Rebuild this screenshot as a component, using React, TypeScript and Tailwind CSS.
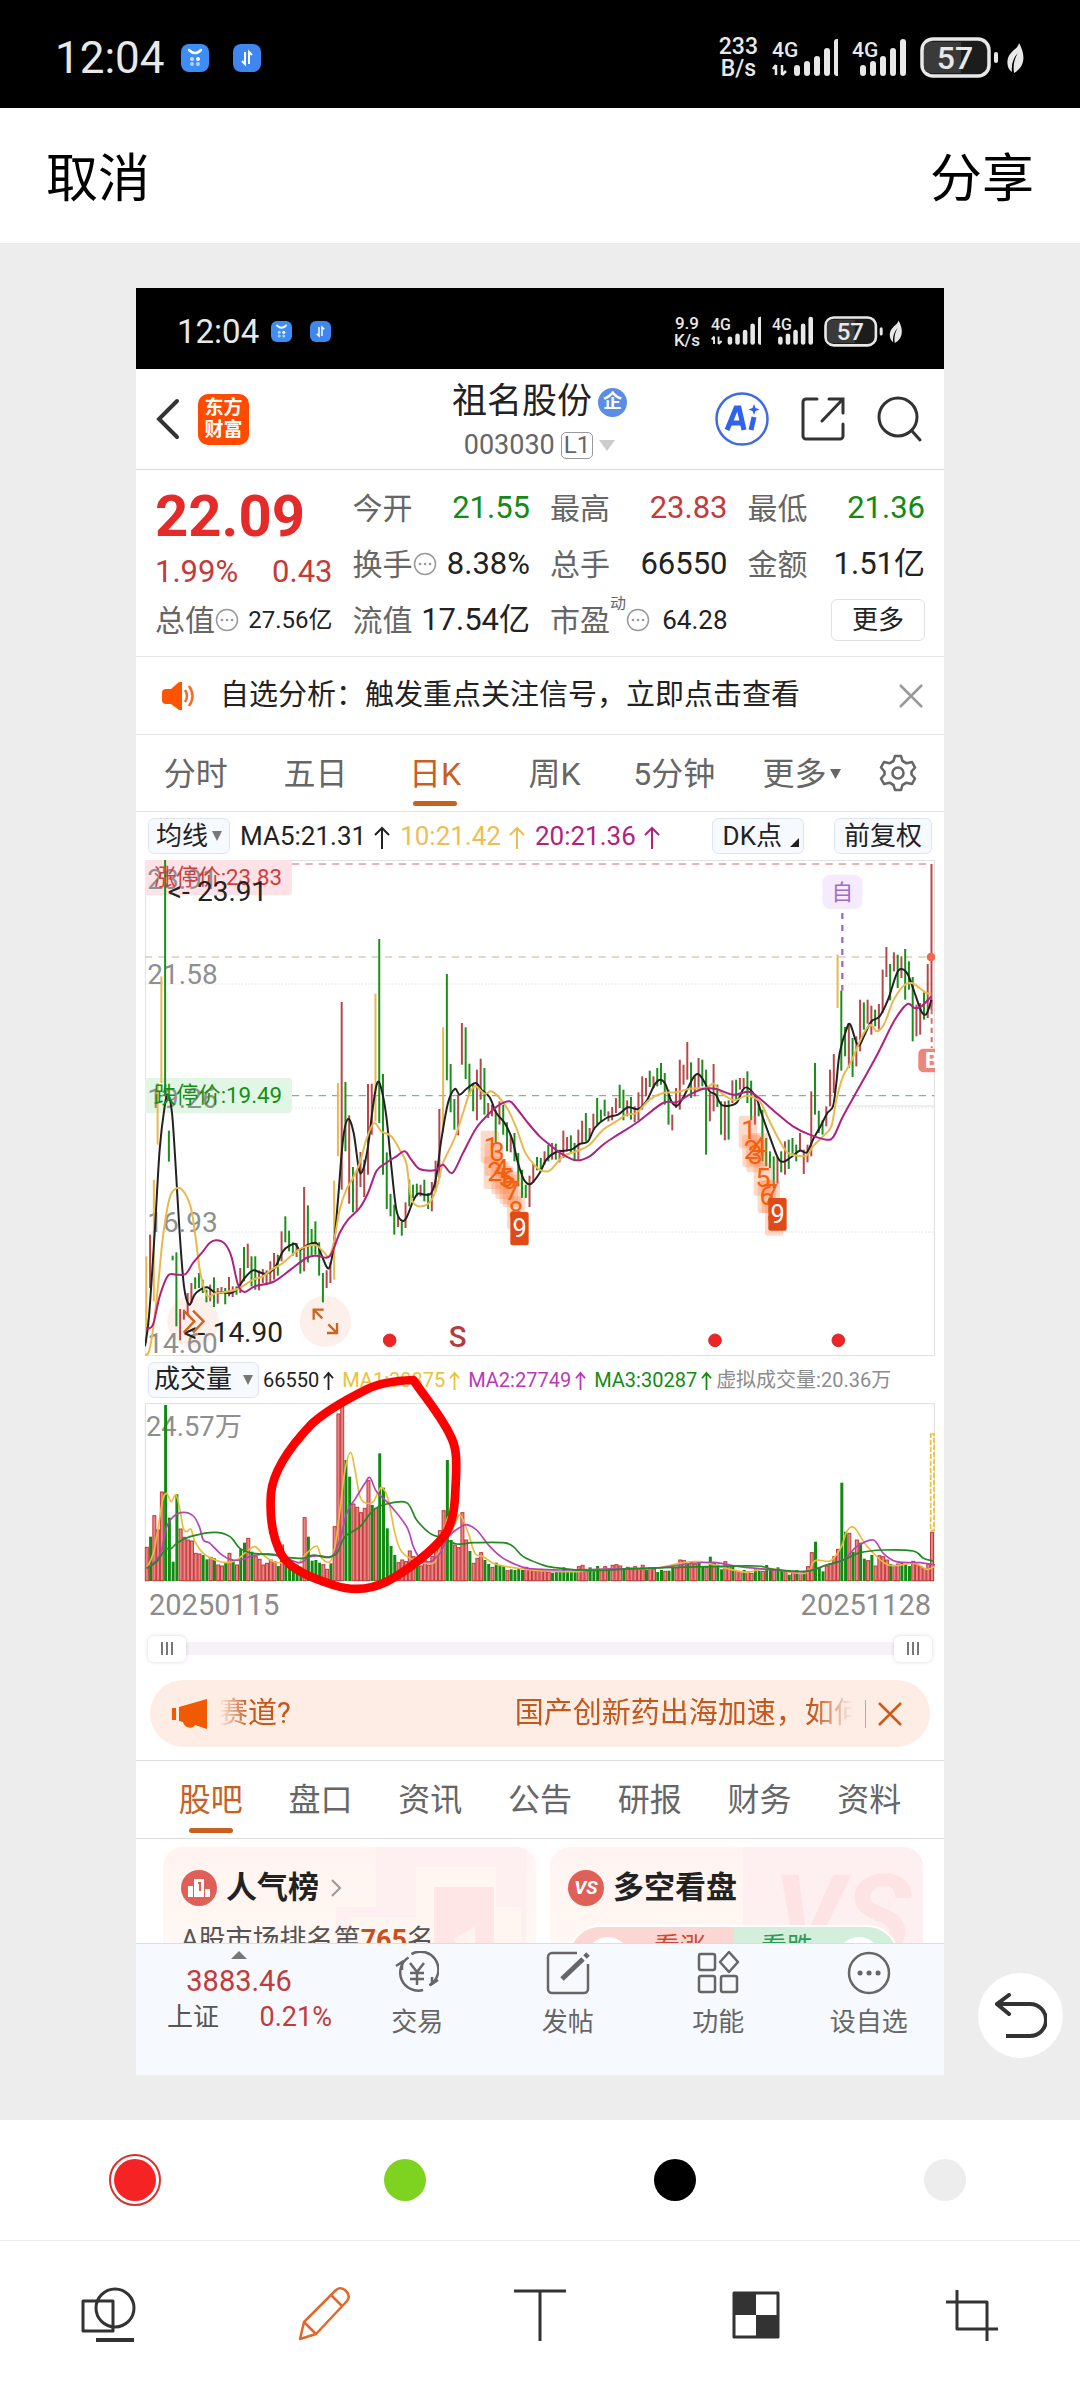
import { useState } from "react";
import type { ReactNode } from "react";

// r = up, g = down, y = limit-up; then the top and bottom of each bar
const CANDLES =
    "y1220-1480 r1155-1315 y990-1355 y700-885 y380-700 g31-735 g843-936 g1218-1232 g1208-1430 r1378-1472 " +
    "r1380-1410 r1330-1395 r1300-1360 g1283-1318 g1270-1315 g1290-1330 g1320-1358 r1305-1355 g1283-1372 r1315-1362 " +
    "r1312-1332 g1315-1364 r1282-1340 r1310-1342 g1310-1335 r1255-1330 g1192-1295 r1182-1255 g1220-1310 g1220-1320 " +
    "r1262-1322 r1258-1300 r1262-1300 r1235-1297 r1210-1290 g1215-1278 r1145-1235 g1100-1178 g1143-1205 g1178-1218 " +
    "r1180-1222 g1195-1272 r1012-1265 g1067-1238 g1138-1218 g1115-1215 g1178-1278 g1270-1358 r1262-1315 r1238-1300 " +
    "y993-1290 y700-920 r457-1020 g697-905 r797-1062 g952-1088 r963-1085 r907-1012 r930-1042 r703-975 " +
    "r702-855 y432-815 g268-820 g673-975 g908-1078 g1033-1100 g1065-1155 r1100-1132 g1115-1158 r1058-1135 " +
    "g990-1070 g1005-1045 g1002-1040 r1005-1040 g990-1055 g1030-1078 r997-1085 r933-1025 r778-985 y533-850 " +
    "g373-692 g643-788 g748-840 r735-857 r520-645 g533-688 g642-732 g700-785 r660-812 r627-750 " +
    "g655-795 r760-805 r765-800 g782-878 r755-825 g765-855 g818-905 r855-908 g850-935 g910-1010 " +
    "g960-1045 g1005-1045 r978-1072 r942-1000 g922-962 g925-960 r905-945 g885-935 r880-930 g882-930 " +
    "r900-938 r843-925 r862-905 g857-910 g880-930 r840-930 r813-880 g790-875 r835-865 r792-840 " +
    "g745-828 g780-815 g750-800 r785-815 r772-812 r745-790 g705-775 g720-812 r752-800 g742-810 " +
    "r770-818 r728-812 r680-780 r685-740 g663-712 r680-715 g655-710 g640-705 g670-765 g720-825 " +
    "r795-842 r715-775 r630-780 r645-705 r577-690 g638-745 r680-740 r625-715 g630-710 g660-915 " +
    "r730-815 r643-785 g705-772 g755-855 r755-872 g752-870 r692-760 g690-750 r685-720 r685-715 " +
    "g665-760 g693-812 r745-825 g762-800 g780-935 g865-950 g905-955 g920-1015 r922-1002 g905-968 " +
    "r875-975 g870-958 g865-912 g885-935 r850-905 r900-973 r885-938 r725-920 g640-795 g783-850 " +
    "g812-855 r770-830 r660-770 r613-730 y315-475 g423-663 g532-620 r520-655 g565-682 r560-650 " +
    "r450-605 g458-540 r450-522 r468-555 g480-530 r463-540 r360-490 r292-382 g343-452 r308-365 " +
    "g315-415 r320-385 g298-450 g335-420 g382-575 r465-560 r460-555 g428-510 r343-505 r43-480";

const VOLUMES =
    "r562 g530 r467 r510 r396 g135 g473 g605 g403 r507 r532 r540 r543 r580 r582 g585 g598 r592 g595 r615 " +
    "r618 g608 r580 g600 r615 g567 g548 r535 g575 r590 r598 r615 r610 r600 r605 g618 r555 g600 g610 g618 " +
    "g615 g620 r473 g530 g602 g600 g608 r614 r628 g610 r500 r162 r140 g300 g350 r432 r442 r458 r445 r362 " +
    "g435 r445 g280 g383 g505 g558 g585 r608 r600 r605 r573 r590 g610 r618 r600 r615 r590 r570 r512 r452 " +
    "g300 g540 r555 r563 r458 r540 g573 r610 r595 r578 g600 g612 r622 g608 g615 g618 r632 g628 g630 g626 " +
    "g630 r622 r628 r632 r630 r628 r634 r636 g638 g636 g634 g622 g632 g636 g634 r620 r616 r628 g622 g634 " +
    "g618 r630 r620 g624 r616 r614 r618 g628 r622 r624 r620 r628 r616 g630 r624 r628 g636 g630 r634 g632 " +
    "g620 r624 r600 r602 g610 r608 r612 g606 g618 r622 g590 r610 g614 g628 r605 r620 g618 r634 r638 g630 " +
    "r636 r640 g628 g632 r634 g615 g626 r630 g622 g632 r634 g644 r636 g630 r640 g634 r620 " +
    "r578 g545 g622 g634 r618 r612 r590 r568 g368 g515 r520 g575 r540 g548 g596 r602 g585 r618 r587 r590 " +
    "r600 g612 r616 r612 g606 g614 g618 r604 r614 r620 r626 r612 r517";

type Bar = { kind: string; top: number; bottom: number };

const parseBars = (text: string, base: number): Bar[] =>
    text.split(" ").map(item => {
        const [top, bottom] = item.slice(1).split("-").map(Number);
        return { kind: item[0], top, bottom: bottom ?? base };
    });

const candles = parseBars(CANDLES, 0);
const volumes = parseBars(VOLUMES, 663);

// turns "x,y x,y ..." into a smooth path
function curve(text: string) {
    const p = text.split(" ").map(s => s.split(",").map(Number));
    let d = `M${p[0][0]} ${p[0][1]}`;
    for (let i = 0; i < p.length - 1; i++) {
        const a = p[i - 1] ?? p[i];
        const b = p[i];
        const c = p[i + 1];
        const e = p[i + 2] ?? c;
        d += `C${b[0] + (c[0] - a[0]) / 6} ${b[1] + (c[1] - a[1]) / 6} ${c[0] - (e[0] - b[0]) / 6} ${c[1] - (e[1] - b[1]) / 6} ${c[0]} ${c[1]}`;
    }
    return d;
}

const MA5 =
    "46,1490 58,1400 75,1150 90,900 105,770 115,735 127,790 138,950 150,1150 163,1310 178,1365 195,1335 212,1320 233,1313 255,1328 280,1328 305,1330 325,1315 345,1285 370,1262 390,1268 410,1272 435,1255 460,1205 480,1188 497,1183 510,1200 530,1188 560,1180 575,1215 597,1256 612,1190 625,1050 640,870 655,808 672,850 688,960 700,960 715,890 730,770 742,702 753,710 770,800 785,950 800,1080 815,1112 830,1105 850,1055 865,1032 885,1035 905,1030 920,980 935,870 955,760 975,718 990,735 1010,718 1038,700 1055,720 1080,743 1100,790 1125,820 1148,870 1165,940 1183,990 1203,1003 1230,970 1250,930 1280,907 1325,900 1350,883 1375,875 1395,835 1430,805 1465,795 1495,773 1525,778 1550,755 1575,705 1592,690 1608,705 1625,755 1643,768 1665,735 1690,685 1705,673 1720,690 1740,725 1758,735 1775,765 1800,768 1822,758 1840,720 1855,715 1880,745 1895,790 1920,860 1945,925 1962,936 1985,922 2010,903 2032,908 2050,870 2075,825 2093,790 2110,770 2120,700 2130,610 2150,540 2162,525 2185,587 2205,555 2225,515 2250,500 2275,450 2300,375 2315,358 2335,375 2355,430 2375,485 2388,495 2398,475 2405,450";
const MA10 =
    "46,1517 58,1505 70,1440 85,1310 100,1160 120,1045 143,1015 165,1030 185,1080 200,1180 212,1270 232,1338 260,1330 300,1325 330,1315 370,1290 400,1280 430,1257 460,1240 500,1205 530,1190 560,1187 580,1205 598,1220 612,1180 630,1080 650,1020 670,985 690,940 710,870 733,820 755,845 785,860 810,900 830,940 840,1020 850,1058 875,1070 905,1052 925,1000 940,940 975,865 1000,790 1020,730 1038,710 1065,732 1085,725 1110,745 1135,780 1160,835 1185,905 1205,935 1230,960 1260,963 1300,920 1340,905 1380,885 1420,840 1460,815 1490,795 1520,790 1560,750 1600,730 1640,728 1680,717 1730,715 1752,702 1775,730 1815,752 1850,738 1890,755 1915,805 1940,855 1970,905 1995,917 2030,918 2050,890 2080,860 2105,830 2120,750 2140,680 2160,645 2180,600 2200,555 2222,525 2242,545 2265,520 2290,455 2320,410 2345,400 2370,415 2390,430 2405,432";
const MA20 =
    "50,1437 70,1425 90,1340 115,1278 140,1275 168,1273 190,1240 220,1205 240,1180 260,1172 285,1182 305,1220 325,1305 345,1327 375,1310 430,1297 480,1262 530,1225 560,1218 600,1220 630,1150 655,1110 690,1075 715,1030 740,965 765,943 800,920 825,905 845,930 870,958 915,962 940,945 968,970 1000,910 1040,835 1080,790 1110,765 1140,755 1160,775 1195,820 1230,860 1260,885 1300,915 1340,932 1380,920 1420,885 1460,858 1520,820 1600,760 1640,758 1680,735 1720,718 1760,718 1810,735 1860,727 1900,755 1940,790 1990,830 2040,855 2090,870 2112,860 2140,800 2190,710 2240,620 2290,520 2320,475 2337,462 2355,475 2375,470 2405,440";

const VMA1 =
    "20,625 40,580 55,500 68,420 80,400 93,425 108,405 120,450 130,505 140,515 153,508 165,545 190,580 225,600 260,608 290,600 320,575 345,560 370,585 400,605 440,610 470,615 495,585 530,558 545,595 570,605 585,560 600,450 615,330 632,277 645,330 660,410 680,430 700,425 715,395 727,383 745,420 765,520 785,575 830,605 860,610 885,605 905,540 925,470 940,500 960,465 985,520 1005,580 1030,590 1060,610 1100,620 1200,632 1304,635 1382,628 1539,625 1617,610 1680,605 1759,625 1821,637 1884,625 1994,640 2025,602 2072,602 2104,560 2120,515 2143,503 2182,560 2245,615 2323,610 2360,628 2385,618";
const VMA2 =
    "20,625 50,600 65,570 80,500 100,470 130,457 160,468 178,500 190,540 210,550 240,580 270,598 300,600 330,590 360,583 400,583 440,595 480,608 510,590 545,588 575,590 600,540 620,460 650,410 675,370 690,353 710,395 750,435 800,500 820,560 840,595 870,605 900,580 925,530 960,502 980,494 1010,510 1050,560 1090,595 1150,622 1200,628 1300,630 1400,627 1540,625 1640,612 1720,607 1800,620 1880,628 1990,635 2060,615 2110,600 2150,560 2200,540 2230,580 2270,605 2340,608 2385,615";
const VMA3 =
    "20,625 50,605 75,570 95,565 110,550 150,530 225,517 270,530 300,565 340,580 400,585 440,592 490,595 520,585 560,592 590,580 615,530 660,500 700,450 740,432 800,428 830,480 870,520 910,535 950,552 1000,548 1090,548 1120,560 1150,590 1200,612 1240,622 1350,632 1500,625 1700,620 1850,618 1900,628 2000,634 2060,615 2110,600 2160,578 2230,570 2320,573 2350,595 2380,603";

const barColor: Record<string, string> = { r: "#b5494a", g: "#1b8f1b", y: "#e9b94f" };

function Signal({ data, className }: { data?: boolean; className: string }) {
    const x0 = data ? 22 : 8;
    return (
        <svg viewBox={data ? "0 0 66 40" : "0 0 54 40"} className={className} fill="#e8e8e8" aria-hidden="true">
            <text x="0" y="19" fontSize="21" fontWeight="500">4G</text>
            {data && <path d="M4 27v10M4 27l-3 4M10 37V27M10 37l4-4" stroke="#e8e8e8" strokeWidth="2.5" fill="none" />}
            {[11, 15, 20, 28, 37].map((h, i) => (
                <rect key={h} x={x0 + i * 10} y={38 - h} width="6" height={h} rx="3" />
            ))}
        </svg>
    );
}

function StatusBar({ speed, unit, small }: { speed: string; unit: string; small?: boolean }) {
    return (
        <div
            className={
                small
                    ? "flex h-[81px] items-center bg-black pt-[6px] pr-[41px] pl-[41px] text-[#e8e8e8]"
                    : "flex h-[108px] items-center bg-black pt-2 pr-[55px] pl-[55px] text-[#e8e8e8]"
            }
        >
            <span className={small ? "text-[33px]" : "text-[44px]"}>12:04</span>
            <svg viewBox="0 0 28 28" className={small ? "ml-3 size-[21px]" : "ml-4 size-7"} aria-hidden="true">
                <rect width="28" height="28" rx="8" fill="#3d8df5" />
                <path d="M8 6q6 6 12 0" stroke="#fff" strokeWidth="2.5" fill="none" strokeLinecap="round" />
                <g fill="#fff">
                    <circle cx="11" cy="15" r="2" opacity=".7" />
                    <circle cx="17" cy="15" r="2" />
                    <circle cx="11" cy="20" r="2" opacity=".6" />
                    <circle cx="17" cy="20" r="2" opacity=".6" />
                </g>
            </svg>
            <svg viewBox="0 0 28 28" className={small ? "ml-[18px] size-[21px]" : "ml-6 size-7"} aria-hidden="true">
                <rect width="28" height="28" rx="8" fill="#3f86ee" />
                <path d="M12 8v12l-3-3M16 20V8l3 3" stroke="#fff" strokeWidth="2" fill="none" />
            </svg>
            <div className={small ? "ml-auto flex items-center gap-[11px]" : "ml-auto flex items-center gap-[14px]"}>
                <div className={small ? "text-center text-[17px] leading-[17px] font-medium" : "text-center text-[23px] leading-[22px] font-medium"}>
                    <div>{speed}</div>
                    <div>{unit}</div>
                </div>
                <Signal data className={small ? "w-[50px]" : "w-[66px]"} />
                <Signal className={small ? "w-[41px]" : "w-[54px]"} />
                <svg viewBox="0 0 105 42" className={small ? "w-[79px]" : "w-[105px]"} aria-hidden="true">
                    <rect x="2" y="2" width="67" height="37" rx="11" fill="#1c1c1c" stroke="#e8e8e8" strokeWidth="3.5" />
                    <path d="M10 5h31v31H10a6 6 0 0 1-6-6V11a6 6 0 0 1 6-6z" fill="#3a3a3a" />
                    <text x="35" y="32" fontSize="32" fontWeight="500" textAnchor="middle" fill="#e8e8e8">57</text>
                    <rect x="74" y="15" width="4" height="11" rx="2" fill="#e8e8e8" />
                    <path d="M99 6c7 12 6 24-5 30-1-7 0-14 4-20-5 5-7 12-6 19-6-4-6-14-1-19 3-4 7-5 8-10z" fill="#e8e8e8" />
                </svg>
            </div>
        </div>
    );
}

function Up() {
    return (
        <svg viewBox="0 0 16 24" className="ml-2 inline h-6 w-4" fill="none" stroke="currentColor" strokeWidth="2" aria-hidden="true">
            <path d="M8 23V2M1 9l7-7 7 7" />
        </svg>
    );
}

function SmallUp() {
    return (
        <svg viewBox="0 0 12 22" className="ml-1 inline h-5 w-[11px]" fill="none" stroke="currentColor" strokeWidth="2" aria-hidden="true">
            <path d="M6 21V2M1 8l5-6 5 6" />
        </svg>
    );
}

function Dots() {
    return (
        <svg viewBox="0 0 24 24" className="size-6 shrink-0" fill="none" stroke="#999" strokeWidth="1.5" aria-hidden="true">
            <circle cx="12" cy="12" r="10.5" />
            <path d="M7 12h.1M12 12h.1M17 12h.1" strokeWidth="2.6" strokeLinecap="round" />
        </svg>
    );
}

function Cell({ label, value, tone, info, sup, size }: { label: string; value: string; tone?: string; info?: boolean; sup?: string; size?: string }) {
    return (
        <div className="flex h-14 items-center whitespace-nowrap">
            <span className="text-[30px] text-[#666]">{label}</span>
            {sup && <span className="self-start text-base text-[#666]">{sup}</span>}
            {info && <Dots />}
            <span className={`ml-auto ${size ?? "text-[31px]"} ${tone ?? "text-[#222]"}`}>{value}</span>
        </div>
    );
}

function Header() {
    return (
        <header className="grid h-[101px] grid-cols-[1fr_auto_1fr] items-center border-b border-[#ddd] bg-white pr-[21px] pl-5">
            <div className="flex items-center gap-[18px]">
                <button aria-label="返回">
                    <svg viewBox="0 0 24 42" className="h-[42px] w-6" fill="none" stroke="#333" strokeWidth="4" strokeLinecap="round">
                        <path d="M21 3L3 21l18 18" />
                    </svg>
                </button>
                <div className="flex size-[51px] flex-col items-center justify-center rounded-[10px] bg-[#ff4b00] text-[19px] leading-[22px] font-bold text-white">
                    <span>东方</span>
                    <span>财富</span>
                </div>
            </div>
            <div className="flex flex-col items-center pt-[6px]">
                <div className="flex items-center gap-[6px]">
                    <h1 className="text-[35px] leading-[46px] text-[#222]">祖名股份</h1>
                    <span className="flex size-[29px] items-center justify-center rounded-full bg-[#5b8ce6] text-[19px] font-bold text-white">企</span>
                </div>
                <div className="flex items-center gap-[6px] text-[27px] leading-[40px] text-[#666]">
                    003030
                    <span className="rounded-[5px] border border-[#999] px-[2px] text-[24px] leading-[25px]">L1</span>
                    <svg viewBox="0 0 16 11" className="w-4" fill="#ccc" aria-hidden="true">
                        <path d="M0 0h16L8 11z" />
                    </svg>
                </div>
            </div>
            <div className="flex items-center justify-end gap-8">
                <button aria-label="AI">
                    <svg viewBox="0 0 54 54" className="size-[54px]" fill="none">
                        <circle cx="27" cy="27" r="25.5" stroke="#4169e1" strokeWidth="2.5" />
                        <path d="M12 38l9-22h3l5 22M16 31h11" stroke="#2f62f0" strokeWidth="5" />
                        <path d="M39 25l-3 13" stroke="#2f62f0" strokeWidth="5" />
                        <path d="M39 12l1.5 4 4 1.5-4 1.5-1.5 4-1.5-4-4-1.5 4-1.5z" fill="#2f62f0" />
                    </svg>
                </button>
                <button aria-label="分享行情">
                    <svg viewBox="0 0 44 44" className="size-11" fill="none" stroke="#333" strokeWidth="3" strokeLinecap="round">
                        <path d="M16 2H5a3 3 0 0 0-3 3v34a3 3 0 0 0 3 3h34a3 3 0 0 0 3-3V27M28 2h14v14M42 2L21 24" />
                    </svg>
                </button>
                <button aria-label="搜索">
                    <svg viewBox="0 0 46 46" className="size-[46px]" fill="none" stroke="#333" strokeWidth="3" strokeLinecap="round">
                        <circle cx="21" cy="21" r="19" />
                        <path d="M35 35l8 9" />
                    </svg>
                </button>
            </div>
        </header>
    );
}

function Quote() {
    return (
        <section className="grid grid-cols-4 gap-x-5 border-b border-[#e5e5e5] px-[19px] pt-[10px] pb-2">
            <div>
                <p className="text-[58px] leading-[72px] font-bold text-[#e52a2a]">22.09</p>
                <p className="flex justify-between text-[31px] leading-10 text-[#c43a3a]">
                    <span>1.99%</span>
                    <span>0.43</span>
                </p>
                <Cell label="总值" value="27.56亿" info size="text-[24px]" />
            </div>
            <div>
                <Cell label="今开" value="21.55" tone="text-[#138a13]" />
                <Cell label="换手" value="8.38%" info />
                <Cell label="流值" value="17.54亿" />
            </div>
            <div>
                <Cell label="最高" value="23.83" tone="text-[#c43a3a]" />
                <Cell label="总手" value="66550" />
                <Cell label="市盈" value="64.28" info sup="动" size="text-[26px]" />
            </div>
            <div>
                <Cell label="最低" value="21.36" tone="text-[#138a13]" />
                <Cell label="金额" value="1.51亿" />
                <div className="flex h-14 items-center justify-end">
                    <button className="h-[42px] rounded-md border border-[#e2e2e2] px-5 text-[26px] leading-[38px] text-[#222]">更多</button>
                </div>
            </div>
        </section>
    );
}

function Notice() {
    return (
        <div className="flex h-[78px] items-center border-b border-[#e5e5e5] pr-[21px] pl-[26px]">
            <svg viewBox="0 0 33 28" className="w-[33px]" fill="#f50" aria-hidden="true">
                <path d="M0 11q0-4 4-4h5l8-7h3v28h-3l-8-6H4q-4 0-4-4z" />
                <path d="M23 8q4 6 0 12M27 4q7 10 0 20" fill="none" stroke="#f76b2a" strokeWidth="2.5" />
            </svg>
            <p className="ml-[25px] text-[29px] whitespace-nowrap text-[#222]">自选分析：触发重点关注信号，立即点击查看</p>
            <button aria-label="关闭" className="ml-auto">
                <svg viewBox="0 0 24 24" className="size-6" stroke="#999" strokeWidth="2.5">
                    <path d="M1 1l22 22M23 1L1 23" />
                </svg>
            </button>
        </div>
    );
}

function Tab({ active, children }: { active?: boolean; children: ReactNode }) {
    return (
        <button
            className={
                active
                    ? "flex h-full flex-col items-center justify-between pt-4 pb-[5px] text-[32px] leading-[46px] whitespace-nowrap text-[#c9601f]"
                    : "flex h-full flex-col items-center justify-between pt-4 pb-[5px] text-[32px] leading-[46px] whitespace-nowrap text-[#666]"
            }
        >
            <span className="flex items-center gap-1">{children}</span>
            {active && <span className="h-[5px] w-11 rounded-full bg-[#c9601f]" />}
        </button>
    );
}

function PeriodTabs() {
    return (
        <nav className="grid h-[77px] grid-cols-[repeat(5,1fr)_136px_56px] items-center border-b border-[#e5e5e5] pr-[18px]">
            <Tab>分时</Tab>
            <Tab>五日</Tab>
            <Tab active>日K</Tab>
            <Tab>周K</Tab>
            <Tab>5分钟</Tab>
            <Tab>
                更多
                <svg viewBox="0 0 11 10" className="w-[11px]" fill="#666" aria-hidden="true">
                    <path d="M0 0h11L5.500 10z" />
                </svg>
            </Tab>
            <button aria-label="设置" className="flex justify-center">
                <svg viewBox="0 0 38 38" className="size-[38px]" fill="none" stroke="#666" strokeWidth="2.6" strokeLinejoin="round">
                    <path d="M16 2h6l1.500 5 4 2.300L33 8l3 5.500-3.500 4v3l3.500 4-3 5.500-5.500-1.300-4 2.300L22 36h-6l-1.500-5-4-2.300L5 30l-3-5.500 3.500-4v-3l-3.500-4L5 8l5.500 1.300 4-2.300z" />
                    <circle cx="19" cy="19" r="5.5" />
                </svg>
            </button>
        </nav>
    );
}

const chip = "flex h-9 items-center rounded-md border border-[#dfe5f0] bg-[#f6f9fe] text-[26px] whitespace-nowrap text-[#222]";

function MaRow() {
    return (
        <div className="flex h-12 items-center pr-3 pl-3 text-[26px] whitespace-nowrap">
            <button className={`${chip} gap-1 px-[7px]`}>
                均线
                <svg viewBox="0 0 10 10" className="w-[10px]" fill="#777" aria-hidden="true">
                    <path d="M0 0h10L5 10z" />
                </svg>
            </button>
            <span className="ml-[10px] text-[#222]">MA5:21.31<Up /></span>
            <span className="ml-[10px] text-[#efbd55]">10:21.42<Up /></span>
            <span className="ml-[10px] text-[#b3207f]">20:21.36<Up /></span>
            <button className={`${chip} ml-auto gap-2 pr-1 pl-[10px]`}>
                DK点
                <svg viewBox="0 0 9 9" className="mt-3 w-[9px]" fill="#222" aria-hidden="true">
                    <path d="M9 0v9H0z" />
                </svg>
            </button>
            <button className={`${chip} ml-[30px] px-[9px]`}>前复权</button>
        </div>
    );
}

const nineSteps = [
    [1053, 843, "1", 1085, 918],
    [1065, 880, "3", 1103, 935],
    [1062, 920, "2", 1095, 995],
    [1085, 935, "4", 1115, 985],
    [1097, 950, "5", 1128, 1012],
    [1110, 965, "6", 1138, 1018],
    [1120, 975, "7", 1148, 1050],
    [1132, 1040, "8", 1159, 1110],
    [1827, 798, "1", 1857, 868],
    [1838, 855, "2", 1865, 928],
    [1850, 870, "3", 1877, 943],
    [1860, 850, "4", 1888, 918],
    [1872, 940, "5", 1900, 1012],
    [1884, 992, "6", 1912, 1065],
    [1896, 992, "7", 1923, 1060],
    [1906, 1060, "8", 1934, 1120],
] as const;

function PriceChart() {
    return (
        <svg viewBox="46 31 2370 1488" className="block h-auto w-full" fill="none">
            <rect x="47" y="32" width="2367" height="1486" stroke="#ddd" strokeWidth="3" />
            {[403, 775, 1147].map(y => (
                <path key={y} d={`M46 ${y}H2414`} stroke="#ccc" strokeWidth="2" strokeDasharray="4 6" />
            ))}
            <path d="M46 322H2414" stroke="#c8b48a" strokeWidth="3" strokeDasharray="22 18" />
            <path d="M487 43H2405" stroke="#cf6b6b" strokeWidth="3" strokeDasharray="22 18" />
            <path d="M487 738H2414" stroke="#7fb98a" strokeWidth="4" strokeDasharray="22 18" />
            <path d="M2120 769H2414" stroke="#ddd" strokeWidth="3" />
            <path d="M46 31H475a12 12 0 0 1 12 12V125a12 12 0 0 1-12 12H46z" fill="#fde3e7" />
            <path d="M46 685H475a12 12 0 0 1 12 12V779a12 12 0 0 1-12 12H46z" fill="#e2f6e5" />
            <circle cx="190" cy="1415" r="77" fill="#fdf0ea" />
            <circle cx="587" cy="1415" r="77" fill="#fdf0ea" />
            <g fill="#8f8f8f" fontSize="84">
                <text x="53" y="117">23.91</text>
                <text x="53" y="403">21.58</text>
                <text x="53" y="775">19.26</text>
                <text x="53" y="1146">16.93</text>
                <text x="53" y="1510">14.60</text>
            </g>
            {candles.map((c, i) => (
                <path key={i} d={`M${50 + i * 11.27} ${c.top}V${c.bottom}`} stroke={barColor[c.kind]} strokeWidth="6" />
            ))}
            <path d="M2138 190V423" stroke="#a06cc8" strokeWidth="7" strokeDasharray="18 18" />
            <path d="M2406 450V595" stroke="#d0706c" strokeWidth="6" strokeDasharray="16 12" />
            <g strokeWidth="6" strokeLinejoin="round">
                <path d={curve(MA5)} stroke="#222" />
                <path d={curve(MA10)} stroke="#e9b94f" />
                <path d={curve(MA20)} stroke="#ae2280" />
            </g>
            {nineSteps.map(([x, y], i) => (
                <rect key={i} x={x} y={y} width="55" height="98" rx="6" fill="#ff7a3d" opacity=".28" />
            ))}
            <g fill="#f5600f" fontSize="80" textAnchor="middle">
                {nineSteps.map(([, , n, x, y], i) => (
                    <text key={i} x={x} y={y}>{n}</text>
                ))}
            </g>
            <rect x="1142" y="1087" width="55" height="100" rx="6" fill="#e04a17" />
            <rect x="1916" y="1045" width="55" height="98" rx="6" fill="#e04a17" />
            <g fill="#fff" fontSize="76" textAnchor="middle">
                <text x="1170" y="1163">9</text>
                <text x="1944" y="1120">9</text>
            </g>
            <text x="72" y="106" fontSize="67" fill="#d23c3c">涨停价:23.83</text>
            <text x="72" y="760" fontSize="67" fill="#159015">跌停价:19.49</text>
            <g fill="#222" fontSize="84">
                <text x="114" y="155">&lt;-<tspan dx="22">23.91</tspan></text>
                <text x="161" y="1478">&lt;-<tspan dx="22">14.90</tspan></text>
            </g>
            <path d="M162 1383l32 32-32 34M190 1383l32 32-32 34" stroke="#d0641f" strokeWidth="7" />
            <path d="M552 1410v-30h30M554 1382l24 24M622 1420v30h-30M620 1448l-24-24" stroke="#d0641f" strokeWidth="7" />
            <g fill="#f02424" stroke="#c83232" strokeWidth="3">
                <circle cx="780" cy="1472" r="19" />
                <circle cx="1756" cy="1472" r="19" />
                <circle cx="2126" cy="1472" r="19" />
            </g>
            <text x="957" y="1492" fontSize="88" fontWeight="500" fill="#b53c3c">S</text>
            <rect x="2078" y="75" width="120" height="103" rx="24" fill="#f5ebfc" />
            <text x="2138" y="151" fontSize="65" textAnchor="middle" fill="#a06cc8">自</text>
            <circle cx="2404" cy="322" r="13" fill="#f2674f" />
            <rect x="2369" y="600" width="80" height="65" rx="12" fill="#ec8679" stroke="#ec8679" strokeWidth="6" />
            <text x="2386" y="656" fontSize="64" fontWeight="800" fill="#fff">B</text>
        </svg>
    );
}

function VolumeChart() {
    return (
        <svg viewBox="15 129 2370 534" className="block h-auto w-full overflow-visible" fill="none">
            <rect x="16" y="131" width="2367" height="531" stroke="#ddd" strokeWidth="3" />
            <text x="18" y="228" fontSize="82" fill="#8f8f8f">24.57万</text>
            {volumes.map((v, i) =>
                v.kind === "r" ? (
                    <rect key={i} x={16 + i * 11.27} y={v.top} width="9" height={662 - v.top} fill="#ef8282" stroke="#bb3a3a" strokeWidth="3" />
                ) : (
                    <rect key={i} x={16 + i * 11.27} y={v.top} width="9" height={663 - v.top} fill="#128a12" />
                )
            )}
            <rect x="2372" y="222" width="10" height="290" stroke="#e8c23a" strokeWidth="5" strokeDasharray="16 5" />
            <g strokeWidth="5" strokeLinejoin="round">
                <path d={curve(VMA1)} stroke="#e8bd3d" />
                <path d={curve(VMA2)} stroke="#b544b5" />
                <path d={curve(VMA3)} stroke="#218a21" />
            </g>
            {/* pencil mark */}
            <path
                d="M820 60C765 62 720 68 680 88C620 118 560 150 515 192C450 260 400 330 393 400C388 470 395 530 425 585C450 630 520 655 580 675C640 695 690 690 740 665C800 635 880 570 915 525C945 480 945 420 948 350C950 300 950 260 930 225C905 170 850 105 820 60"
                stroke="#f00"
                strokeWidth="26"
                strokeLinejoin="round"
                strokeLinecap="round"
            />
        </svg>
    );
}

function VolumeRow() {
    return (
        <div className="flex h-[47px] items-center pl-3 text-[20px] whitespace-nowrap">
            <button className={`${chip} gap-[11px] px-[5px]`}>
                成交量
                <svg viewBox="0 0 10 10" className="w-[10px]" fill="#777" aria-hidden="true">
                    <path d="M0 0h10L5 10z" />
                </svg>
            </button>
            <span className="ml-1 text-[#222]">66550<SmallUp /></span>
            <span className="ml-2 text-[#e8c23a]">MA1:30875<SmallUp /></span>
            <span className="ml-2 text-[#b83ab8]">MA2:27749<SmallUp /></span>
            <span className="ml-2 text-[#158a15]">MA3:30287<SmallUp /></span>
            <span className="ml-1 text-[#8c8c8c]">虚拟成交量:20.36万</span>
        </div>
    );
}

const thumb =
    "h-[13px] min-w-0 flex-1 appearance-none bg-[#f6f2f7] [&::-webkit-slider-thumb]:h-[26px] [&::-webkit-slider-thumb]:w-[38px] [&::-webkit-slider-thumb]:appearance-none [&::-webkit-slider-thumb]:rounded-md [&::-webkit-slider-thumb]:border-0 [&::-webkit-slider-thumb]:bg-white [&::-webkit-slider-thumb]:bg-[repeating-linear-gradient(90deg,#777_0_2px,transparent_2px_5px)] [&::-webkit-slider-thumb]:bg-[length:12px_13px] [&::-webkit-slider-thumb]:bg-center [&::-webkit-slider-thumb]:bg-no-repeat [&::-webkit-slider-thumb]:shadow-[0_0_4px_rgba(0,0,0,0.15)]";

function RangeSlider() {
    return (
        <div className="flex h-[35px] items-center px-3">
            <input type="range" aria-label="开始日期" defaultValue={0} className={thumb} />
            <input type="range" aria-label="结束日期" defaultValue={100} className={thumb} />
        </div>
    );
}

function Banner() {
    return (
        <div className="px-[14px] pt-[14px] pb-[13px]">
            <div className="flex h-[67px] items-center rounded-full bg-[#feede5] pr-7 pl-[22px] text-[29px] text-[#c4571a]">
                <svg viewBox="0 0 35 30" className="w-[35px] shrink-0" fill="#f05a00" aria-hidden="true">
                    <path d="M0 9h4v12H0zM7 8L35 0v30l-12-4c-2 4-10 4-12-3L7 22z" />
                </svg>
                <div className="ml-3 flex min-w-0 flex-1 overflow-hidden whitespace-nowrap [mask-image:linear-gradient(90deg,transparent_0,#000_30px,#000_calc(100%-40px),transparent)]">
                    <span>赛道?</span>
                    <span className="ml-[224px]">国产创新药出海加速，如何布局</span>
                </div>
                <span className="ml-3 h-7 w-px bg-[#d9a080]" />
                <button aria-label="关闭公告" className="ml-3">
                    <svg viewBox="0 0 24 24" className="size-6" stroke="#d0591a" strokeWidth="2.5">
                        <path d="M1 1l22 22M23 1L1 23" />
                    </svg>
                </button>
            </div>
        </div>
    );
}

function Cards() {
    return (
        <section className="grid h-[104px] grid-cols-2 gap-[14px] overflow-hidden pt-2 pr-[21px] pl-[27px]">
            <div className="relative h-40 overflow-hidden rounded-[20px] bg-linear-to-b from-[#fff4f1] to-[#fffaf5] pt-[22px] pl-[18px]">
                <svg viewBox="0 0 200 160" className="absolute top-0 right-0 w-[200px]" aria-hidden="true">
                    <path d="M40 0H190V160H0V60H40z" fill="#feeff0" />
                    <path d="M80 20H160V60H185V160H15V70H80z" fill="#fff6f1" />
                    <path d="M98 40H158V160H98z" fill="#fde6e5" />
                    <path d="M120 96l14-8v60" fill="none" stroke="#fff3ef" strokeWidth="10" />
                </svg>
                <h2 className="relative flex items-center text-[31px] leading-[38px] font-bold text-[#222]">
                    <svg viewBox="0 0 36 36" className="mr-[9px] size-9" aria-hidden="true">
                        <circle cx="18" cy="18" r="18" fill="#df5f59" />
                        <path d="M7 16h5v11H7zM24 19h5v8h-5zM13 9h10v18H13z" fill="#fff" />
                        <path d="M17 13h2v8" fill="none" stroke="#df5f59" strokeWidth="2" />
                    </svg>
                    人气榜
                    <svg viewBox="0 0 11 18" className="ml-3 w-[11px]" fill="none" stroke="#999" strokeWidth="2" aria-hidden="true">
                        <path d="M1 1l8 8-8 8" />
                    </svg>
                </h2>
                <p className="relative mt-[13px] text-[27px] leading-10 whitespace-nowrap text-[#555]">
                    A股市场排名第<b className="text-[#c94f1c]">765</b>名
                </p>
            </div>
            <div className="relative h-40 overflow-hidden rounded-[20px] bg-linear-to-b from-[#fff4f1] to-[#fffaf5] pt-[22px] pr-6 pl-[18px]">
                <div className="absolute top-0 right-0 h-full w-[180px] bg-[#feeff0] pr-3 text-right text-[112px] leading-[140px] font-bold text-[#fde3e3] italic">VS</div>
                <h2 className="relative flex items-center text-[31px] leading-[38px] font-bold text-[#222]">
                    <span className="mr-[9px] flex size-9 items-center justify-center rounded-full bg-[#df5f59] text-[19px] text-white italic">VS</span>
                    多空看盘
                </h2>
                <div className="relative mt-[18px] flex h-16 overflow-hidden rounded-full border-2 border-white text-[26px] leading-10">
                    <span className="flex flex-1 items-start gap-6 bg-[#fad7d3] pl-4 text-[#cf4a35]">
                        <span className="mt-[10px] size-11 rounded-full bg-white" />
                        看涨
                    </span>
                    <span className="flex flex-1 items-start justify-end gap-6 bg-[#d3efdb] pr-4 text-[#2f9a55]">
                        看跌
                        <span className="mt-[10px] size-11 rounded-full bg-white" />
                    </span>
                </div>
            </div>
        </section>
    );
}

function BottomItem({ label, children }: { label: string; children: ReactNode }) {
    return (
        <button className="flex flex-1 flex-col items-center pt-[7px] text-[26px] leading-[34px] text-[#666]">
            <svg viewBox="0 0 44 44" className="mb-[10px] size-11" fill="none" stroke="#666" strokeWidth="2.5">
                {children}
            </svg>
            {label}
        </button>
    );
}

function BottomBar() {
    return (
        <footer className="flex h-[132px] border-t border-[#ddd] bg-[#f6f9fe]">
            <div className="w-[206px] pt-[7px] text-[27px] leading-[36px] text-[#c43a3a]">
                <svg viewBox="0 0 16 8" className="mx-auto w-4" fill="#777" aria-hidden="true">
                    <path d="M0 8h16L8 0z" />
                </svg>
                <p className="pt-1 text-center text-[29px]">3883.46</p>
                <p className="flex justify-between pr-[10px] pl-[31px]">
                    <span className="text-[26px] text-[#555]">上证</span>
                    <span>0.21%</span>
                </p>
            </div>
            <BottomItem label="交易">
                <path d="M10 9A18 18 0 0 0 32 37M12 5A18 18 0 0 1 37 31" transform="rotate(14 22 22)" />
                <path d="M1 15l6-4v8M43 29l-6 4v-7M15 12l7 9 7-9M22 21v13M15 22h14M15 28h14" />
            </BottomItem>
            <BottomItem label="发帖">
                <path d="M31 2H6a4 4 0 0 0-4 4v32a4 4 0 0 0 4 4h32a4 4 0 0 0 4-4V13" />
                <path d="M16 28L37 8" strokeWidth="5" />
                <path d="M39 6l3-3" strokeWidth="5" />
            </BottomItem>
            <BottomItem label="功能">
                <rect x="3" y="3" width="16" height="16" rx="2" />
                <rect x="3" y="25" width="16" height="16" rx="2" />
                <rect x="25" y="25" width="16" height="16" rx="2" />
                <path d="M33 1l9 10-9 10-9-10z" strokeLinejoin="round" />
            </BottomItem>
            <BottomItem label="设自选">
                <circle cx="22" cy="22" r="20" />
                <path d="M13 22h.1M22 22h.1M31 22h.1" strokeWidth="5" strokeLinecap="round" />
            </BottomItem>
        </footer>
    );
}

const colors = [
    { name: "红色", dot: "bg-[#f52323]" },
    { name: "绿色", dot: "bg-[#7ed321]" },
    { name: "黑色", dot: "bg-black" },
    { name: "灰色", dot: "bg-[#ededed]" },
];

const tools = [
    {
        name: "形状",
        icon: (
            <>
                <path d="M3 15h30v30H3z" />
                <circle cx="35" cy="22" r="19" />
                <path d="M16 54h38" strokeWidth="4" />
            </>
        ),
    },
    {
        name: "画笔",
        icon: <path d="M4 53l4-17L40 4q5-4 10 1t1 10L20 48zM8 36l12 12M35 9l12 12" strokeWidth="2.5" />,
    },
    { name: "文字", icon: <path d="M2 5h52M28 5v50" /> },
    {
        name: "马赛克",
        icon: (
            <>
                <path d="M6 7h44v44H6z" />
                <path d="M6 7h22v22H6zM28 29h22v22H28z" fill="#333" stroke="none" />
            </>
        ),
    },
    { name: "裁剪", icon: <path d="M2 16h41v39M13 4v39h41" /> },
];

export default function App() {
    const [color, setColor] = useState("红色");
    const [tool, setTool] = useState("画笔");

    return (
        <main className="bg-white font-['Roboto','Noto_Sans_CJK_SC',sans-serif] text-black">
            <StatusBar speed="233" unit="B/s" />

            <div className="flex h-[135px] items-center justify-between px-[46px] pt-2 text-[52px]">
                <button>取消</button>
                <button>分享</button>
            </div>

            <div className="relative bg-[#ededed] px-[136px] pt-[45px] pb-[45px]">
                <div className="bg-white">
                    <StatusBar speed="9.9" unit="K/s" small />
                    <Header />
                    <Quote />
                    <Notice />
                    <PeriodTabs />
                    <MaRow />
                    <div className="px-[9px]">
                        <PriceChart />
                    </div>
                    <VolumeRow />
                    <div className="px-[9px]">
                        <VolumeChart />
                        <div className="flex h-[50px] items-center justify-between px-1 text-[29px] text-[#8c8c8c]">
                            <span>20250115</span>
                            <span>20251128</span>
                        </div>
                    </div>
                    <RangeSlider />
                    <Banner />
                    <nav className="grid h-[79px] grid-cols-7 border-y border-[#ddd] px-5">
                        <Tab active>股吧</Tab>
                        <Tab>盘口</Tab>
                        <Tab>资讯</Tab>
                        <Tab>公告</Tab>
                        <Tab>研报</Tab>
                        <Tab>财务</Tab>
                        <Tab>资料</Tab>
                    </nav>
                    <Cards />
                    <BottomBar />
                </div>

                <button aria-label="撤销" className="absolute right-[17px] bottom-[62px] flex size-[85px] items-center justify-center rounded-full bg-white">
                    <svg viewBox="0 0 52 46" className="w-[52px]" fill="none" stroke="#333" strokeWidth="4">
                        <path d="M3 11h32a16 16 0 0 1 0 32H11" />
                        <path d="M14 2L2 11l12 10" strokeLinecap="round" />
                    </svg>
                </button>
            </div>

            <div className="grid h-[121px] grid-cols-4 place-items-center border-b border-[#ededed]">
                {colors.map(c => (
                    <label
                        key={c.name}
                        className={
                            color === c.name
                                ? "flex size-[52px] items-center justify-center rounded-full border-2 border-[#d83030]"
                                : "flex size-[52px] items-center justify-center rounded-full"
                        }
                    >
                        <input
                            type="radio"
                            name="color"
                            aria-label={c.name}
                            checked={color === c.name}
                            onChange={() => setColor(c.name)}
                            className={`size-[42px] appearance-none rounded-full ${c.dot}`}
                        />
                    </label>
                ))}
            </div>

            <div className="grid h-[147px] grid-cols-5 place-items-center">
                {tools.map(t => (
                    <button key={t.name} aria-label={t.name} onClick={() => setTool(t.name)} className={tool === t.name ? "text-[#e0682a]" : "text-[#333]"}>
                        <svg viewBox="0 0 56 58" className="w-14" fill="none" stroke="currentColor" strokeWidth="3" strokeLinejoin="round">
                            {t.icon}
                        </svg>
                    </button>
                ))}
            </div>
        </main>
    );
}
